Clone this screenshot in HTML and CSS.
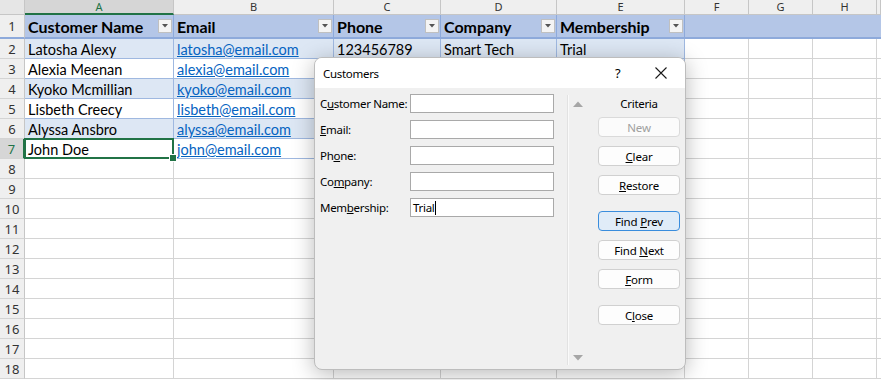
FILE: index.html
```html
<!DOCTYPE html>
<html lang="en">
<head>
  <meta charset="UTF-8">
  <title>Customers - Data Form</title>
  <link rel="stylesheet" href="styles.css">
</head>
<body>
  <div class="sheet">
    <div class="row col-heads">
      <div class="corner"></div>
      <div class="ch active">A</div>
      <div class="ch">B</div>
      <div class="ch">C</div>
      <div class="ch">D</div>
      <div class="ch">E</div>
      <div class="ch">F</div>
      <div class="ch">G</div>
      <div class="ch">H</div>
      <div class="ch"></div>
    </div>

    <div class="row head-row">
      <div class="rh">1</div>
      <div class="cell th">Customer Name<span class="filter"><svg width="6" height="4" viewBox="0 0 6 4"><path d="M0 0h6L3 3.5z" fill="#555"/></svg></span></div>
      <div class="cell th">Email<span class="filter"><svg width="6" height="4" viewBox="0 0 6 4"><path d="M0 0h6L3 3.5z" fill="#555"/></svg></span></div>
      <div class="cell th">Phone<span class="filter"><svg width="6" height="4" viewBox="0 0 6 4"><path d="M0 0h6L3 3.5z" fill="#555"/></svg></span></div>
      <div class="cell th">Company<span class="filter"><svg width="6" height="4" viewBox="0 0 6 4"><path d="M0 0h6L3 3.5z" fill="#555"/></svg></span></div>
      <div class="cell th">Membership<span class="filter"><svg width="6" height="4" viewBox="0 0 6 4"><path d="M0 0h6L3 3.5z" fill="#555"/></svg></span></div>
      <div class="cell fill"></div>
      <div class="cell fill"></div>
      <div class="cell fill"></div>
      <div class="cell fill"></div>
    </div>

    <div class="row">
      <div class="rh">2</div>
      <div class="cell t band">Latosha Alexy</div>
      <div class="cell t band"><a href="#">latosha@email.com</a></div>
      <div class="cell t band">123456789</div>
      <div class="cell t band">Smart Tech</div>
      <div class="cell t band">Trial</div>
      <div class="cell"></div><div class="cell"></div><div class="cell"></div><div class="cell"></div>
    </div>
    <div class="row">
      <div class="rh">3</div>
      <div class="cell t">Alexia Meenan</div>
      <div class="cell t"><a href="#">alexia@email.com</a></div>
      <div class="cell t"></div><div class="cell t"></div><div class="cell t"></div>
      <div class="cell"></div><div class="cell"></div><div class="cell"></div><div class="cell"></div>
    </div>
    <div class="row">
      <div class="rh">4</div>
      <div class="cell t band">Kyoko Mcmillian</div>
      <div class="cell t band"><a href="#">kyoko@email.com</a></div>
      <div class="cell t band"></div><div class="cell t band"></div><div class="cell t band"></div>
      <div class="cell"></div><div class="cell"></div><div class="cell"></div><div class="cell"></div>
    </div>
    <div class="row">
      <div class="rh">5</div>
      <div class="cell t">Lisbeth Creecy</div>
      <div class="cell t"><a href="#">lisbeth@email.com</a></div>
      <div class="cell t"></div><div class="cell t"></div><div class="cell t"></div>
      <div class="cell"></div><div class="cell"></div><div class="cell"></div><div class="cell"></div>
    </div>
    <div class="row">
      <div class="rh">6</div>
      <div class="cell t band">Alyssa Ansbro</div>
      <div class="cell t band"><a href="#">alyssa@email.com</a></div>
      <div class="cell t band"></div><div class="cell t band"></div><div class="cell t band"></div>
      <div class="cell"></div><div class="cell"></div><div class="cell"></div><div class="cell"></div>
    </div>
    <div class="row">
      <div class="rh active">7</div>
      <div class="cell t selected">John Doe</div>
      <div class="cell t"><a href="#">john@email.com</a></div>
      <div class="cell t"></div><div class="cell t"></div><div class="cell t"></div>
      <div class="cell"></div><div class="cell"></div><div class="cell"></div><div class="cell"></div>
    </div>
    <div class="row"><div class="rh">8</div><div class="cell"></div><div class="cell"></div><div class="cell"></div><div class="cell"></div><div class="cell"></div><div class="cell"></div><div class="cell"></div><div class="cell"></div><div class="cell"></div></div>
    <div class="row"><div class="rh">9</div><div class="cell"></div><div class="cell"></div><div class="cell"></div><div class="cell"></div><div class="cell"></div><div class="cell"></div><div class="cell"></div><div class="cell"></div><div class="cell"></div></div>
    <div class="row"><div class="rh">10</div><div class="cell"></div><div class="cell"></div><div class="cell"></div><div class="cell"></div><div class="cell"></div><div class="cell"></div><div class="cell"></div><div class="cell"></div><div class="cell"></div></div>
    <div class="row"><div class="rh">11</div><div class="cell"></div><div class="cell"></div><div class="cell"></div><div class="cell"></div><div class="cell"></div><div class="cell"></div><div class="cell"></div><div class="cell"></div><div class="cell"></div></div>
    <div class="row"><div class="rh">12</div><div class="cell"></div><div class="cell"></div><div class="cell"></div><div class="cell"></div><div class="cell"></div><div class="cell"></div><div class="cell"></div><div class="cell"></div><div class="cell"></div></div>
    <div class="row"><div class="rh">13</div><div class="cell"></div><div class="cell"></div><div class="cell"></div><div class="cell"></div><div class="cell"></div><div class="cell"></div><div class="cell"></div><div class="cell"></div><div class="cell"></div></div>
    <div class="row"><div class="rh">14</div><div class="cell"></div><div class="cell"></div><div class="cell"></div><div class="cell"></div><div class="cell"></div><div class="cell"></div><div class="cell"></div><div class="cell"></div><div class="cell"></div></div>
    <div class="row"><div class="rh">15</div><div class="cell"></div><div class="cell"></div><div class="cell"></div><div class="cell"></div><div class="cell"></div><div class="cell"></div><div class="cell"></div><div class="cell"></div><div class="cell"></div></div>
    <div class="row"><div class="rh">16</div><div class="cell"></div><div class="cell"></div><div class="cell"></div><div class="cell"></div><div class="cell"></div><div class="cell"></div><div class="cell"></div><div class="cell"></div><div class="cell"></div></div>
    <div class="row"><div class="rh">17</div><div class="cell"></div><div class="cell"></div><div class="cell"></div><div class="cell"></div><div class="cell"></div><div class="cell"></div><div class="cell"></div><div class="cell"></div><div class="cell"></div></div>
    <div class="row"><div class="rh">18</div><div class="cell"></div><div class="cell"></div><div class="cell"></div><div class="cell"></div><div class="cell"></div><div class="cell"></div><div class="cell"></div><div class="cell"></div><div class="cell"></div></div>
  </div>

  <div class="dialog">
    <div class="dialog-title">
      <span class="dialog-name">Customers</span>
      <span class="dialog-help">?</span>
      <span class="dialog-close"><svg width="12" height="12" viewBox="0 0 12 12"><path d="M0.5 0.5L11.5 11.5M11.5 0.5L0.5 11.5" stroke="#1a1a1a" stroke-width="1.1"/></svg></span>
    </div>
    <div class="dialog-body">
      <div class="form">
        <div class="field"><label>C<u>u</u>stomer Name:</label><div class="input"></div></div>
        <div class="field"><label><u>E</u>mail:</label><div class="input"></div></div>
        <div class="field"><label>Ph<u>o</u>ne:</label><div class="input"></div></div>
        <div class="field"><label>Co<u>m</u>pany:</label><div class="input"></div></div>
        <div class="field"><label>Mem<u>b</u>ership:</label><div class="input">Trial<span class="caret"></span></div></div>
      </div>
      <div class="side">
        <div class="scroll">
          <svg width="10" height="6" viewBox="0 0 10 6"><path d="M0 6L5 0.5L10 6z" fill="#a6a6a6"/></svg>
          <svg width="10" height="6" viewBox="0 0 10 6"><path d="M0 0L5 5.5L10 0z" fill="#a6a6a6"/></svg>
        </div>
        <div class="actions">
          <div class="criteria">Criteria</div>
          <button class="btn" disabled>New</button>
          <button class="btn"><u>C</u>lear</button>
          <button class="btn"><u>R</u>estore</button>
          <button class="btn default group">Find <u>P</u>rev</button>
          <button class="btn">Find <u>N</u>ext</button>
          <button class="btn"><u>F</u>orm</button>
          <button class="btn group">C<u>l</u>ose</button>
        </div>
      </div>
    </div>
  </div>
</body>
</html>
```

FILE: styles.css
```css
* {
  box-sizing: border-box;
}
body {
  margin: 0;
  width: 881px;
  height: 380px;
  overflow: hidden;
  background: #fff;
  position: relative;
  font-family: Lato, "Liberation Sans", sans-serif;
}
.row {
  display: grid;
  grid-template-columns: 25px 149px 160px 107px 116px 128px 64px 64px 64px 4px;
  height: 20px;
}
.col-heads {
  height: 15px;
}
.corner {
  background: #e6e6e6;
  border-right: 1px solid #c6c6c6;
  border-bottom: 1px solid #c6c6c6;
}
.ch {
  background: #efefef;
  border-right: 1px solid #c6c6c6;
  border-bottom: 1px solid #c6c6c6;
  font-size: 11px;
  line-height: 14px;
  color: #333;
  text-align: center;
  font-family: "Noto Sans", sans-serif;
}
.ch.active {
  background: #d6d6d6;
  color: #217346;
  border-bottom: 2px solid #217346;
  line-height: 13px;
}
.rh {
  background: #efefef;
  border-right: 1px solid #c6c6c6;
  border-bottom: 1px solid #d4d4d4;
  font-size: 13px;
  color: #333;
  display: flex;
  align-items: center;
  justify-content: center;
  font-family: "Noto Sans", sans-serif;
}
.rh.active {
  background: #d6d6d6;
  color: #217346;
  border-right: 2px solid #217346;
}
.cell {
  border-right: 1px solid #d4d4d4;
  border-bottom: 1px solid #d4d4d4;
  display: flex;
  align-items: center;
  padding: 1px 3px 0;
  font-size: 14.5px;
  white-space: nowrap;
  overflow: hidden;
  color: #000;
}
.cell a {
  color: #0563c1;
  text-decoration: underline;
}
.head-row {
  height: 24px;
  background: #b4c6e7;
}
.head-row .rh {
  border-bottom: 2px solid #8eaadb;
}
.cell.th {
  font-weight: bold;
  font-size: 16px;
  justify-content: space-between;
  padding: 0 1px 0 3px;
  border-right: 1px solid #8eaadb;
  border-bottom: 2px solid #8eaadb;
}
.cell.fill {
  border-right: none;
  border-bottom: 2px solid #8eaadb;
}
.filter {
  width: 14px;
  height: 14px;
  background: #f4f4f4;
  border: 1px solid #c0c0c0;
  display: flex;
  align-items: center;
  justify-content: center;
  flex-shrink: 0;
}
.cell.t {
  border-right-color: #9fb8e0;
  border-bottom-color: #9fb8e0;
}
.cell.band {
  background: #dde7f4;
}
.cell.selected {
  position: relative;
  overflow: visible;
}
.cell.selected::before {
  content: "";
  position: absolute;
  left: -1px;
  top: -1px;
  right: -1px;
  bottom: -1px;
  border: 2px solid #217346;
}
.cell.selected::after {
  content: "";
  position: absolute;
  right: -4px;
  bottom: -4px;
  width: 6px;
  height: 6px;
  background: #217346;
  border: 1px solid #fff;
  z-index: 2;
}

/* data form dialog */
.dialog {
  position: absolute;
  left: 314px;
  top: 57px;
  width: 372px;
  height: 313px;
  border-radius: 8px;
  border: 1px solid #bdbdbd;
  overflow: hidden;
  background: #f0f0f0;
  box-shadow: 0 4px 22px rgba(0, 0, 0, 0.28);
  font-family: "Noto Sans", sans-serif;
  font-size: 11.5px;
  letter-spacing: -0.3px;
  color: #000;
}
.dialog-title {
  height: 30px;
  background: #fff;
  display: flex;
  align-items: center;
  padding-left: 8px;
}
.dialog-name {
  flex: 1;
}
.dialog-help {
  width: 14px;
  margin-right: 26px;
  font-size: 13px;
}
.dialog-close {
  display: flex;
  margin-right: 18px;
}
.dialog-body {
  display: flex;
  height: 282px;
}
.form {
  width: 252px;
  padding: 6px 0 0 5px;
}
.field {
  display: flex;
  align-items: center;
  height: 19px;
  margin-bottom: 7px;
}
.field label {
  width: 90px;
  white-space: nowrap;
}
.input {
  width: 144px;
  height: 19px;
  background: #fff;
  border: 1px solid #a9a9a9;
  padding: 0 2px;
  line-height: 17px;
  display: flex;
  align-items: center;
}
.caret {
  width: 1px;
  height: 14px;
  background: #000;
  margin-left: 1px;
}
.side {
  display: flex;
  margin: 7px 0 5px;
  border-left: 1px solid #e2e2e2;
  box-shadow: inset 1px 0 #fafafa;
}
.scroll {
  width: 18px;
  display: flex;
  flex-direction: column;
  justify-content: space-between;
  align-items: center;
  padding: 6px 0 4px 1px;
}
.actions {
  display: flex;
  flex-direction: column;
  align-items: flex-start;
  padding-left: 12px;
}
.criteria {
  width: 82px;
  text-align: center;
  line-height: 16px;
  margin-top: 1px;
}
.btn {
  width: 82px;
  height: 20px;
  margin-top: 9px;
  font-family: "Noto Sans", sans-serif;
  font-size: 11.5px;
  letter-spacing: -0.2px;
  color: #000;
  background: #fdfdfd;
  border: 1px solid #d0d0d0;
  border-radius: 4px;
  padding: 0;
  line-height: 17px;
}
.criteria + .btn {
  margin-top: 5px;
}
.btn:disabled {
  color: #a0a0a0;
  background: #fbfbfb;
  border-color: #dadada;
}
.btn.group {
  margin-top: 16px;
}
.btn.default {
  background: #e0ecf8;
  border-color: #3a8ddd;
}
```
